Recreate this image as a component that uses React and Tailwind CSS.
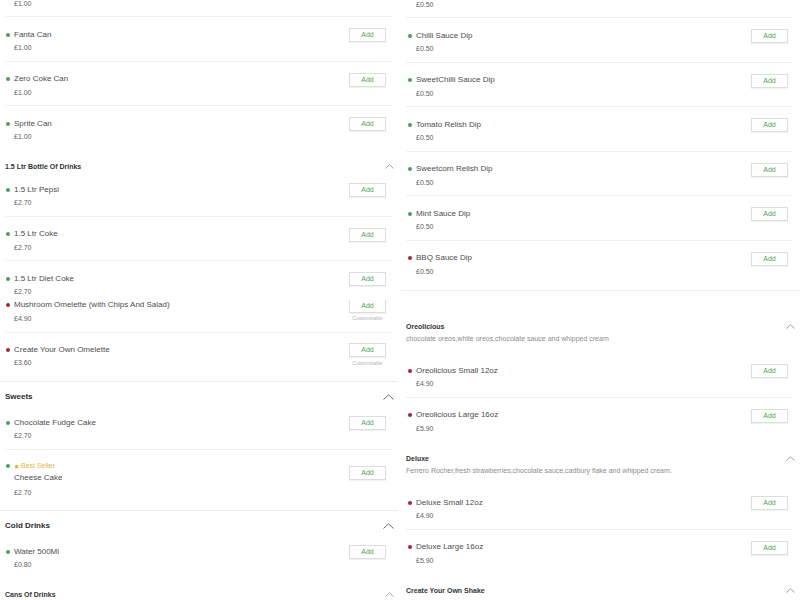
import React from "react";

const LEFT_ROW = "mx-[5px] pl-[1px] pr-[7px]";
const RIGHT_ROW = "ml-[5px] mr-[7px] pl-[2px] pr-[5px]";

function Dot({ veg }) {
  return (
    <span
      className={`block w-[4px] h-[4px] rounded-full shrink-0 ${veg ? "bg-[#4c9e5c]" : "bg-[#a32630]"}`}
    />
  );
}

function Star() {
  return (
    <svg width="5" height="5" viewBox="0 0 10 10" className="shrink-0">
      <polygon points="5,0.3 6.4,3.4 9.8,3.7 7.2,6 8,9.6 5,7.8 2,9.6 2.8,6 0.2,3.7 3.6,3.4" fill="#e6a919" />
    </svg>
  );
}

function Chevron({ big }) {
  if (big) {
    return (
      <svg width="11" height="6" viewBox="0 0 11 6" className="shrink-0">
        <path d="M0.5 5.5 L5.5 0.8 L10.5 5.5" fill="none" stroke="#555" strokeWidth="0.9" />
      </svg>
    );
  }
  return (
    <svg width="9" height="5" viewBox="0 0 9 5" className="shrink-0">
      <path d="M0.5 4.5 L4.5 0.8 L8.5 4.5" fill="none" stroke="#8a8a8a" strokeWidth="0.8" />
    </svg>
  );
}

function Item({
  name,
  price,
  veg = true,
  h = "h-[44.5px]",
  inner = "h-full",
  row = LEFT_ROW,
  line = true,
  full = false,
  custom = false,
  best = false,
}) {
  return (
    <div className={`${h} shrink-0 overflow-hidden ${full ? "border-b border-[#ececec]" : ""}`}>
      <div className={`${inner} ${row} flex justify-between ${line ? "border-b border-[#f0f0f0]" : ""}`}>
        <div className={best ? "pt-[12.5px]" : custom ? "pt-[11.5px]" : "pt-[12.5px]"}>
          {best && (
            <div className="flex items-center h-[8px]">
              <Dot veg={veg} />
              <span className="w-[4px]" />
              <Star />
              <span className="ml-[2px] text-[7px] leading-[8px] text-[#e3b548]">Best Seller</span>
            </div>
          )}
          <div className={`flex items-center h-[10px] gap-[4px] ${best ? "mt-[3px] pl-[8px]" : ""}`}>
            {!best && <Dot veg={veg} />}
            <span className="text-[8px] leading-[10px] text-[#4d4d4d] whitespace-nowrap">{name}</span>
          </div>
          <div className={`pl-[8px] text-[7px] leading-[9px] text-[#606060] ${best ? "mt-[4.5px]" : "mt-[3.5px]"}`}>
            {price}
          </div>
        </div>
        <div
          className={`flex flex-col items-center ${best ? "pt-[16.5px]" : custom ? "pt-[10px]" : "pt-[11px]"}`}
        >
          <button className="w-[37px] h-[14px] border border-[#dddddd] bg-white text-[7px] leading-[12px] text-[#4ea352] shadow-[0_1px_1px_rgba(0,0,0,0.05)]">
            Add
          </button>
          {custom && (
            <div className="mt-[2.5px] text-[5px] leading-[6px] text-[#b5b5b5]">Customizable</div>
          )}
        </div>
      </div>
    </div>
  );
}

function Header({ title, desc, big = false, h, pt, pad = "pl-[5px] pr-[4px]" }) {
  return (
    <div className={`${h} ${pt} ${pad} shrink-0 overflow-hidden`}>
      <div className="flex items-center justify-between h-[10px]">
        <span
          className={
            big
              ? "text-[8px] leading-[10px] font-bold text-[#2b2b2b]"
              : "text-[7px] leading-[10px] font-bold text-[#333333]"
          }
        >
          {title}
        </span>
        <Chevron big={big} />
      </div>
      {desc && (
        <div className="mt-[2.5px] text-[7px] leading-[9px] text-[#8c8c8c] whitespace-nowrap">{desc}</div>
      )}
    </div>
  );
}

export default function App() {
  return (
    <div
      className="w-[800px] h-[600px] overflow-hidden bg-white flex"
      style={{ fontFamily: '"Liberation Sans", Arial, sans-serif' }}
    >
      {/* left column */}
      <div className="w-[398px] h-[600px] overflow-hidden flex flex-col shrink-0">
        <div className="-mt-[27.5px]">
          <Item name="Coke Can" price="£1.00" />
        </div>
        <Item name="Fanta Can" price="£1.00" />
        <Item name="Zero Coke Can" price="£1.00" />
        <Item name="Sprite Can" price="£1.00" line={false} />
        <Header title="1.5 Ltr Bottle Of Drinks" h="h-[21.5px]" pt="pt-[11px]" />
        <Item name="1.5 Ltr Pepsi" price="£2.70" />
        <Item name="1.5 Ltr Coke" price="£2.70" />
        <Item name="1.5 Ltr Diet Coke" price="£2.70" h="h-[39px]" line={false} />
        <Item
          name="Mushroom Omelette (with Chips And Salad)"
          price="£4.90"
          veg={false}
          custom
          h="h-[33px]"
          inner="h-[44.5px] -mt-[11.5px]"
        />
        <Item
          name="Create Your Own Omelette"
          price="£3.60"
          veg={false}
          custom
          h="h-[49px]"
          line={false}
          full
        />
        <Header title="Sweets" big h="h-[23px]" pt="pt-[9.5px]" />
        <Item name="Chocolate Fudge Cake" price="£2.70" />
        <Item name="Cheese Cake" price="£2.70" best h="h-[61.5px]" line={false} full />
        <Header title="Cold Drinks" big h="h-[23px]" pt="pt-[9.5px]" />
        <Item name="Water 500Ml" price="£0.80" line={false} />
        <Header title="Cans Of Drinks" h="h-[21.5px]" pt="pt-[11px]" />
      </div>

      <div className="w-[3px] shrink-0" />

      {/* right column */}
      <div className="w-[399px] h-[600px] overflow-hidden flex flex-col shrink-0">
        <div className="-mt-[26.5px]">
          <Item name="Garlic Mayo Dip" price="£0.50" row={RIGHT_ROW} />
        </div>
        <Item name="Chilli Sauce Dip" price="£0.50" row={RIGHT_ROW} />
        <Item name="SweetChilli Sauce Dip" price="£0.50" row={RIGHT_ROW} />
        <Item name="Tomato Relish Dip" price="£0.50" row={RIGHT_ROW} />
        <Item name="Sweetcorn Relish Dip" price="£0.50" row={RIGHT_ROW} />
        <Item name="Mint Sauce Dip" price="£0.50" row={RIGHT_ROW} />
        <Item
          name="BBQ Sauce Dip"
          price="£0.50"
          veg={false}
          row={RIGHT_ROW}
          h="h-[50.5px]"
          line={false}
          full
        />
        <Header
          title="Oreolicious"
          desc="chocolate oreos,white oreos,chocolate sauce and whipped cream"
          h="h-[62px]"
          pt="pt-[30.5px]"
          pad="pl-[5px] pr-[5px]"
        />
        <Item name="Oreolicious Small 12oz" price="£4.90" veg={false} row={RIGHT_ROW} />
        <Item
          name="Oreolicious Large 16oz"
          price="£5.90"
          veg={false}
          row={RIGHT_ROW}
          h="h-[45.5px]"
          line={false}
        />
        <Header
          title="Deluxe"
          desc="Ferrero Rocher,fresh strawberries,chocolate sauce,cadbury flake and whipped cream."
          h="h-[42px]"
          pt="pt-[10.5px]"
          pad="pl-[5px] pr-[5px]"
        />
        <Item name="Deluxe Small 12oz" price="£4.90" veg={false} row={RIGHT_ROW} />
        <Item
          name="Deluxe Large 16oz"
          price="£5.90"
          veg={false}
          row={RIGHT_ROW}
          h="h-[45.5px]"
          line={false}
        />
        <Header
          title="Create Your Own Shake"
          desc="Choose your base, your flavours and your toppings"
          h="h-[42px]"
          pt="pt-[10.5px]"
          pad="pl-[5px] pr-[5px]"
        />
      </div>
    </div>
  );
}
